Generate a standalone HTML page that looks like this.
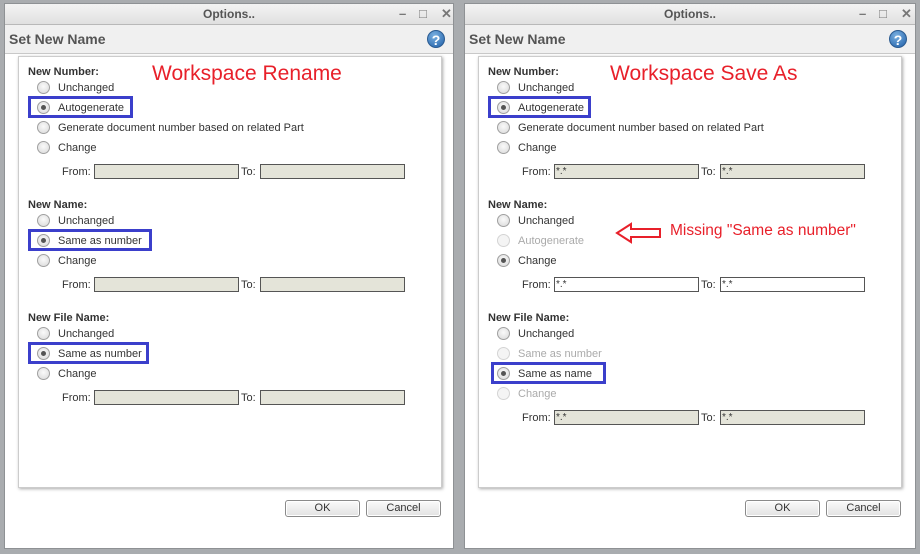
<!DOCTYPE html>
<html><head><style>
*{margin:0;padding:0;box-sizing:border-box}
body{width:920px;height:554px;background:#a9acaf;position:relative;overflow:hidden;font-family:"Liberation Sans",Arial,sans-serif;font-size:11px;color:#333}
.win{position:absolute;top:0;width:458px;height:554px;background:#a9acaf}
.in{position:absolute;left:4px;top:3px;right:4px;bottom:5px;background:#fff;border:1px solid #8e9194}
.title{position:absolute;left:0;right:0;top:0;height:21px;background:linear-gradient(#f3f3f3,#e0e0e0);border-bottom:1px solid #b8b8b8;text-align:center;font-weight:bold;font-size:12px;line-height:20px;color:#555}
.ctl{position:absolute;top:0;font-size:13px;font-weight:bold;color:#777;line-height:20px}
.hdr{position:absolute;left:0;right:0;top:21px;height:29px;background:#f0f0f0;border-bottom:1px solid #c8c8c8;font-weight:bold;font-size:14px;line-height:28px;padding-left:4px;color:#555}
.help{position:absolute;right:8px;top:5px;width:18px;height:18px;border-radius:50%;background:radial-gradient(circle at 40% 30%,#7ab0e0,#1f5fa8);color:#fff;font-size:14px;font-weight:bold;text-align:center;line-height:18px;border:1px solid #2a5a90}
.panel{position:absolute;left:14px;top:52px;width:424px;height:433px;border:1px solid #ccc;box-shadow:1px 1px 3px #aaa;background:#fff}
.a{position:absolute;white-space:nowrap;margin-top:1px}
.lbl{font-weight:bold;color:#333}
.r{position:absolute;width:13px;height:13px;border-radius:50%;border:1px solid #a0a0a0;background:radial-gradient(circle at 50% 40%,#fafafa,#d8d8d8)}
.r.s::after{content:"";position:absolute;left:3px;top:3px;width:5px;height:5px;border-radius:50%;background:#555}
.dis{color:#aaa}
.r.d{border-color:#d4d4d4;background:#f4f4f4}
.box{position:absolute;border:3px solid #3b3fcb}
.inp{position:absolute;height:15px;border:1px solid #555;background:#e4e4d9;font-size:10px;line-height:13px;padding-left:1px}
.inp.w{background:#fff}
.btn{position:absolute;top:500px;height:17px;border:1px solid #8a8a8a;border-radius:3px;background:linear-gradient(#fafafa,#e2e2e2);text-align:center;line-height:15px;color:#333;font-size:11px;box-shadow:inset 0 0 0 1px #fff}
.red{position:absolute;color:#e8202a;font-size:21px;white-space:nowrap}
</style></head><body>

<div class="win" style="left:0">
<div class="in">
<div class="title">Options..</div>
<div class="ctl" style="left:394px">&#8211;</div>
<div class="ctl" style="left:414px">&#9633;</div>
<div class="ctl" style="left:436px">&#10005;</div>
<div class="hdr">Set New Name<div class="help">?</div></div>
</div>
</div>
<div class="win" style="left:460px;width:460px">
<div class="in">
<div class="title">Options..</div>
<div class="ctl" style="left:394px">&#8211;</div>
<div class="ctl" style="left:414px">&#9633;</div>
<div class="ctl" style="left:436px">&#10005;</div>
<div class="hdr">Set New Name<div class="help">?</div></div>
</div>
</div>

<div class="panel" style="left:18px;top:56px;height:432px"></div>
<div class="panel" style="left:478px;top:56px;height:432px"></div>

<!-- LEFT content -->
<div class="a lbl" style="left:28px;top:65px">New Number:</div>
<div class="r" style="left:37px;top:81px"></div><div class="a" style="left:58px;top:81px">Unchanged</div>
<div class="box" style="left:28px;top:96px;width:105px;height:22px"></div>
<div class="r s" style="left:37px;top:101px"></div><div class="a" style="left:58px;top:101px">Autogenerate</div>
<div class="r" style="left:37px;top:121px"></div><div class="a" style="left:58px;top:121px">Generate document number based on related Part</div>
<div class="r" style="left:37px;top:141px"></div><div class="a" style="left:58px;top:141px">Change</div>
<div class="a" style="left:62px;top:165px">From:</div><div class="inp" style="left:94px;top:164px;width:145px"></div>
<div class="a" style="left:241px;top:165px">To:</div><div class="inp" style="left:260px;top:164px;width:145px"></div>

<div class="a lbl" style="left:28px;top:198px">New Name:</div>
<div class="r" style="left:37px;top:214px"></div><div class="a" style="left:58px;top:214px">Unchanged</div>
<div class="box" style="left:28px;top:229px;width:124px;height:22px"></div>
<div class="r s" style="left:37px;top:234px"></div><div class="a" style="left:58px;top:234px">Same as number</div>
<div class="r" style="left:37px;top:254px"></div><div class="a" style="left:58px;top:254px">Change</div>
<div class="a" style="left:62px;top:278px">From:</div><div class="inp" style="left:94px;top:277px;width:145px"></div>
<div class="a" style="left:241px;top:278px">To:</div><div class="inp" style="left:260px;top:277px;width:145px"></div>

<div class="a lbl" style="left:28px;top:311px">New File Name:</div>
<div class="r" style="left:37px;top:327px"></div><div class="a" style="left:58px;top:327px">Unchanged</div>
<div class="box" style="left:28px;top:342px;width:121px;height:22px"></div>
<div class="r s" style="left:37px;top:347px"></div><div class="a" style="left:58px;top:347px">Same as number</div>
<div class="r" style="left:37px;top:367px"></div><div class="a" style="left:58px;top:367px">Change</div>
<div class="a" style="left:62px;top:391px">From:</div><div class="inp" style="left:94px;top:390px;width:145px"></div>
<div class="a" style="left:241px;top:391px">To:</div><div class="inp" style="left:260px;top:390px;width:145px"></div>

<div class="red" style="left:152px;top:62px">Workspace Rename</div>
<div class="btn" style="left:285px;width:75px">OK</div>
<div class="btn" style="left:366px;width:75px">Cancel</div>

<!-- RIGHT content -->
<div class="a lbl" style="left:488px;top:65px">New Number:</div>
<div class="r" style="left:497px;top:81px"></div><div class="a" style="left:518px;top:81px">Unchanged</div>
<div class="box" style="left:488px;top:96px;width:103px;height:22px"></div>
<div class="r s" style="left:497px;top:101px"></div><div class="a" style="left:518px;top:101px">Autogenerate</div>
<div class="r" style="left:497px;top:121px"></div><div class="a" style="left:518px;top:121px">Generate document number based on related Part</div>
<div class="r" style="left:497px;top:141px"></div><div class="a" style="left:518px;top:141px">Change</div>
<div class="a" style="left:522px;top:165px">From:</div><div class="inp" style="left:554px;top:164px;width:145px">*.*</div>
<div class="a" style="left:701px;top:165px">To:</div><div class="inp" style="left:720px;top:164px;width:145px">*.*</div>

<div class="a lbl" style="left:488px;top:198px">New Name:</div>
<div class="r" style="left:497px;top:214px"></div><div class="a" style="left:518px;top:214px">Unchanged</div>
<div class="r d" style="left:497px;top:234px"></div><div class="a dis" style="left:518px;top:234px">Autogenerate</div>
<div class="r s" style="left:497px;top:254px"></div><div class="a" style="left:518px;top:254px">Change</div>
<div class="a" style="left:522px;top:278px">From:</div><div class="inp w" style="left:554px;top:277px;width:145px">*.*</div>
<div class="a" style="left:701px;top:278px">To:</div><div class="inp w" style="left:720px;top:277px;width:145px">*.*</div>

<div class="a lbl" style="left:488px;top:311px">New File Name:</div>
<div class="r" style="left:497px;top:327px"></div><div class="a" style="left:518px;top:327px">Unchanged</div>
<div class="r d" style="left:497px;top:347px"></div><div class="a dis" style="left:518px;top:347px">Same as number</div>
<div class="box" style="left:491px;top:362px;width:115px;height:22px"></div>
<div class="r s" style="left:497px;top:367px"></div><div class="a" style="left:518px;top:367px">Same as name</div>
<div class="r d" style="left:497px;top:387px"></div><div class="a dis" style="left:518px;top:387px">Change</div>
<div class="a" style="left:522px;top:411px">From:</div><div class="inp" style="left:554px;top:410px;width:145px">*.*</div>
<div class="a" style="left:701px;top:411px">To:</div><div class="inp" style="left:720px;top:410px;width:145px">*.*</div>

<div class="red" style="left:610px;top:62px">Workspace Save As</div>
<svg style="position:absolute;left:615px;top:221px" width="48" height="24"><path d="M2 12 L16 3 L16 8 L45 8 L45 16 L16 16 L16 21 Z" fill="#fff" stroke="#e8202a" stroke-width="2"/></svg>
<div class="red" style="left:670px;top:222px;font-size:15.5px">Missing "Same as number"</div>
<div class="btn" style="left:745px;width:75px">OK</div>
<div class="btn" style="left:826px;width:75px">Cancel</div>
</body></html>
